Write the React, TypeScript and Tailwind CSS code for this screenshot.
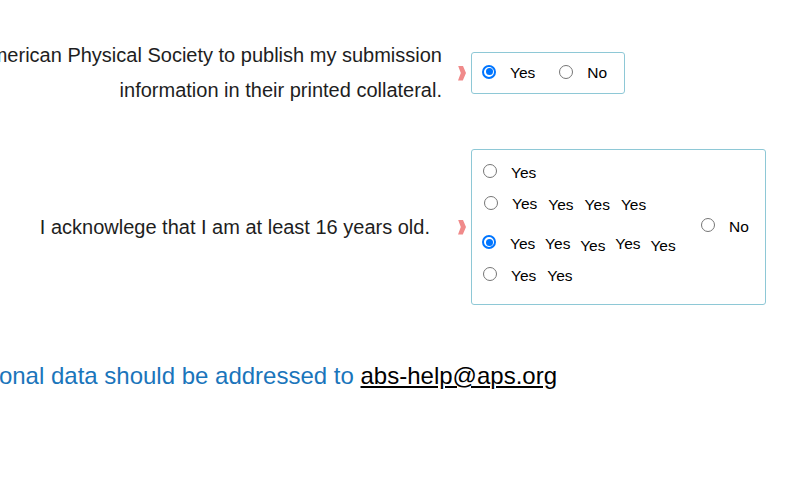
import { ReactNode } from 'react';

function Radio({ checked = false, className = '' }: { checked?: boolean; className?: string }) {
  if (checked) {
    return (
      <span className={`w-[14px] h-[14px] shrink-0 rounded-full border-2 border-[#0075ff] bg-white flex items-center justify-center ${className}`}>
        <span className="w-[7px] h-[7px] rounded-full bg-[#0075ff]" />
      </span>
    );
  }
  return <span className={`w-[14px] h-[14px] shrink-0 rounded-full border border-[#767676] bg-white ${className}`} />;
}

function Chevron() {
  return (
    <span className="block w-[8px] h-[15px] bg-[#f08a8a] [clip-path:polygon(0_0,60%_0,100%_50%,60%_100%,0_100%,35%_50%)]" />
  );
}

function Words({ items, gap }: { items: string[]; gap: string }) {
  return (
    <span className={`flex ${gap}`}>
      {items.map((cls, i) => (
        <span key={i} className={cls}>
          Yes
        </span>
      ))}
    </span>
  );
}

function Label({ children, className = '' }: { children: ReactNode; className?: string }) {
  return (
    <div className={`w-[445px] shrink-0 flex flex-col items-end whitespace-nowrap text-[20px] text-[#1e1e1e] ${className}`}>
      {children}
    </div>
  );
}

export default function App() {
  return (
    <div className="w-[807px] h-[489px] overflow-hidden bg-white font-['Liberation_Sans',Arial,sans-serif]">
      {/* Publish consent */}
      <div className="flex items-center mt-[38px]">
        <Label className="leading-[35px] pr-[3px]">
          <span>I authorize the American Physical Society to publish my submission</span>
          <span>information in their printed collateral.</span>
        </Label>
        <div className="ml-[13px]">
          <Chevron />
        </div>
        <div className="ml-[5px] w-[154px] h-[42px] flex items-center border border-[#8ec8d6] rounded-[3px] pl-[10px] text-[15.5px] text-black">
          <Radio checked className="mb-[3px]" />
          <span className="ml-[14px]">Yes</span>
          <Radio className="ml-[24px] mb-[3px]" />
          <span className="ml-[14px]">No</span>
        </div>
      </div>

      {/* Age confirmation */}
      <div className="flex items-center mt-[41px]">
        <Label className="pr-[15px]">
          <span>I acknowlege that I am at least 16 years old.</span>
        </Label>
        <div className="ml-[13px]">
          <Chevron />
        </div>
        <div className="ml-[5px] w-[295px] h-[156px] flex border border-[#8ec8d6] rounded-[3px] text-[15.5px] text-black">
          <div className="w-[229px] flex flex-col pt-[7px]">
            <div className="h-[32px] flex items-center pl-[11px]">
              <Radio className="mb-[4px]" />
              <span className="ml-[14px]">Yes</span>
            </div>
            <div className="h-[32px] flex items-center pl-[12px]">
              <Radio className="mb-[4px]" />
              <span className="ml-[14px]">
                <Words items={['-translate-y-[1px]', '', '', '']} gap="gap-[11px]" />
              </span>
            </div>
            <div className="h-[32px] mt-[7px] flex items-center pl-[10px]">
              <Radio checked className="mb-[4px]" />
              <span className="ml-[14px]">
                <Words items={['', '', 'translate-y-[2px]', '', 'translate-y-[2px]']} gap="gap-[9.8px]" />
              </span>
            </div>
            <div className="h-[32px] flex items-center pl-[11px]">
              <Radio className="mb-[4px]" />
              <span className="ml-[14px]">
                <Words items={['', '']} gap="gap-[11px]" />
              </span>
            </div>
          </div>
          <div className="flex items-center">
            <Radio className="mb-[4px]" />
            <span className="ml-[14px]">No</span>
          </div>
        </div>
      </div>

      {/* Contact */}
      <div className="mt-[57px] w-[557px] flex justify-end whitespace-nowrap text-[24px] leading-[28px]">
        <span className="text-[#1a75bb]">
          Questions about your personal data should be addressed to{' '}
          <a href="#" className="text-black underline">abs-help@aps.org</a>
        </span>
      </div>
    </div>
  );
}
